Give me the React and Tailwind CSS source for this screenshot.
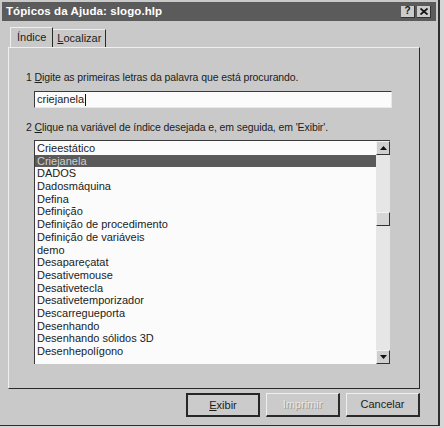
import React from "react";

const items = [
  "Crieestático",
  "Criejanela",
  "DADOS",
  "Dadosmáquina",
  "Defina",
  "Definição",
  "Definição de procedimento",
  "Definição de variáveis",
  "demo",
  "Desapareçatat",
  "Desativemouse",
  "Desativetecla",
  "Desativetemporizador",
  "Descarregueporta",
  "Desenhando",
  "Desenhando sólidos 3D",
  "Desenhepolígono",
];

function ArrowButton({ down }) {
  return (
    <div className="w-[14px] h-[14px] bg-[#cfcfcf] border-t border-l border-[#f2f2f2] border-r border-b border-r-[#333] border-b-[#333] flex items-center justify-center">
      <svg width="7" height="4" viewBox="0 0 7 4">
        {down ? <path d="M0 0h7L3.5 4z" fill="#111" /> : <path d="M0 4h7L3.5 0z" fill="#111" />}
      </svg>
    </div>
  );
}

function App() {
  return (
    <div className="w-[444px] h-[428px] bg-[#d6d6d6] text-[11px] text-[#1c1c1c] font-['Liberation_Sans',Arial,sans-serif] overflow-hidden">
      <div className="w-[440px] h-[426px] bg-[#c9c9c9] border-r-2 border-b border-[#2f2f2f] p-[2px] flex flex-col">
        {/* title bar */}
        <div className="h-[19px] bg-[#5b5b5b] flex items-center justify-between pl-[4px] pr-[5px]">
          <span className="text-white font-bold text-[11.5px] tracking-[0.1px]">Tópicos da Ajuda: slogo.hlp</span>
          <div className="flex gap-[2px]">
            <div className="w-[14px] h-[12px] bg-[#cbcbcb] border-r border-b border-[#333] flex items-center justify-center text-[10px] font-bold leading-none text-[#111]">?</div>
            <div className="w-[14px] h-[12px] bg-[#cbcbcb] border-r border-b border-[#333] flex items-center justify-center">
              <svg width="8" height="7" viewBox="0 0 8 7">
                <path d="M0.5 0.5L7.5 6.5M7.5 0.5L0.5 6.5" stroke="#111" strokeWidth="1.7" />
              </svg>
            </div>
          </div>
        </div>

        {/* tabs */}
        <div className="flex items-end ml-[8px] mt-[6px] h-[20px]">
          <div className="h-[20px] px-[6px] flex items-center border-l border-t border-[#efefef] border-r border-r-[#2a2a2a]">
            Índice
          </div>
          <div className="h-[18px] px-[4px] flex items-center border-t border-[#efefef] border-r border-r-[#2a2a2a]">
            <span><span className="underline">L</span>ocalizar</span>
          </div>
        </div>

        {/* panel */}
        <div className="ml-[6px] w-[412px] h-[342px] border-l border-t border-[#efefef] border-r border-b border-r-[#2a2a2a] border-b-[#2a2a2a] pt-[22px] pl-[17px]">
          <div className="leading-[14px] text-[10.5px] tracking-[-0.1px]">
            1 <span className="underline">D</span>igite as primeiras letras da palavra que está procurando.
          </div>
          <div className="ml-[8px] mt-[7px] w-[358px] h-[17px] bg-[#fbfbfb] border-t border-l border-[#3a3a3a] border-r border-b border-r-[#e8e8e8] border-b-[#e8e8e8] flex items-center pl-[2px]">
            <span>criejanela</span>
            <span className="w-px h-[12px] bg-[#111] ml-[1px]" />
          </div>
          <div className="leading-[14px] mt-[12px] text-[10.5px] tracking-[-0.1px]">
            2 <span className="underline">C</span>lique na variável de índice desejada e, em seguida, em 'Exibir'.
          </div>
          <div className="ml-[8px] mt-[6px] w-[356px] h-[224px] bg-[#fbfbfb] border-t border-l border-[#3a3a3a] flex">
            <div className="flex-1 pt-[1px]">
              {items.map((it, i) => (
                <div
                  key={it}
                  className={
                    i === 1
                      ? "h-[12.7px] leading-[12.7px] pl-[2px] bg-[#5a5a5a] text-[#cfcfcf]"
                      : "h-[12.7px] leading-[12.7px] pl-[2px]"
                  }
                >
                  {it}
                </div>
              ))}
            </div>
            <div className="w-[14px] bg-[#e6e6e6] flex flex-col">
              <ArrowButton />
              <div className="flex-1 flex flex-col pt-[57px]">
                <div className="h-[14px] bg-[#d6d6d6] border-t border-l border-[#f2f2f2] border-r border-b border-r-[#333] border-b-[#333]" />
              </div>
              <ArrowButton down />
            </div>
          </div>
        </div>

        {/* buttons */}
        <div className="flex justify-end gap-[6px] mt-[4px] pr-[16px]">
          <button className="w-[74px] h-[24px] bg-[#cbcbcb] border-2 border-[#262626]">
            <span className="underline">E</span>xibir
          </button>
          <button className="w-[74px] h-[24px] bg-[#cbcbcb] border-t border-l border-[#efefef] border-r-2 border-b-2 border-r-[#2a2a2a] border-b-[#2a2a2a] text-[#e6e6e6] [text-shadow:1px_1px_0_#9a9a9a]">
            Imprimir
          </button>
          <button className="w-[74px] h-[24px] bg-[#cbcbcb] border-t border-l border-[#efefef] border-r-2 border-b-2 border-r-[#2a2a2a] border-b-[#2a2a2a]">
            Cancelar
          </button>
        </div>
      </div>
    </div>
  );
}

export default App;
